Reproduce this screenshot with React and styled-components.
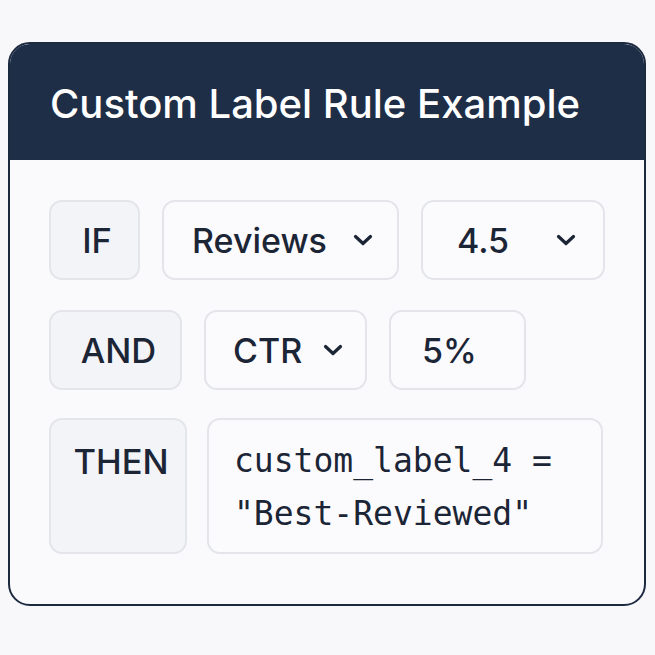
import React from "react";
import styled, { createGlobalStyle } from "styled-components";

const GlobalStyle = createGlobalStyle`
  html, body {
    margin: 0;
    padding: 0;
    background: #f8f8fa;
    font-family: Inter, "Liberation Sans", sans-serif;
  }
`;

const Page = styled.div`
  width: 655px;
  height: 655px;
  padding: 42px 9px 0 8px;
  box-sizing: border-box;
`;

const Card = styled.div`
  width: 638px;
  height: 564px;
  box-sizing: border-box;
  border: 2.5px solid #1c2a40;
  border-radius: 22px;
  overflow: hidden;
  background: #fafafc;
  display: flex;
  flex-direction: column;
`;

const Header = styled.div`
  height: 116px;
  background: #1f2e47;
  display: flex;
  align-items: center;
  padding-left: 40px;
  padding-top: 2px;
  box-sizing: border-box;
`;

const Title = styled.h1`
  margin: 0;
  color: #ffffff;
  font-size: 40px;
  font-weight: 500;
  letter-spacing: 0;
`;

const Body = styled.div`
  padding: 40px 0 0 39px;
  display: flex;
  flex-direction: column;
`;

const Row = styled.div`
  display: flex;
  gap: ${(p) => p.$gap || 21}px;
  margin-bottom: ${(p) => p.$mb || 0}px;
`;

const Box = styled.div`
  box-sizing: border-box;
  width: ${(p) => p.$w}px;
  height: ${(p) => p.$h || 80}px;
  border: 2px solid #e3e5ea;
  border-radius: 13px;
  background: ${(p) => (p.$keyword ? "#f3f4f8" : "#fbfbfd")};
  color: #1c2536;
  font-size: 34px;
  font-weight: 500;
  display: flex;
  align-items: center;
`;

const Keyword = styled(Box)`
  justify-content: center;
  font-size: 34.5px;
  padding-left: ${(p) => p.$shift || 0}px;
  align-items: ${(p) => (p.$top ? "flex-start" : "center")};
  padding-top: ${(p) => (p.$top ? 21 : 0)}px;
`;

const Select = styled(Box)`
  justify-content: space-between;
  padding: 0 ${(p) => p.$pr}px 0 ${(p) => p.$pl}px;
`;

const Field = styled(Box)`
  padding-left: ${(p) => p.$pl}px;
`;

const Code = styled(Box)`
  font-family: "DejaVu Sans Mono", "Liberation Mono", monospace;
  font-weight: 400;
  font-size: 33px;
  line-height: 53px;
  align-items: flex-start;
  padding: 14px 0 0 25px;
  white-space: pre;
`;

const Chevron = () => (
  <svg width="22" height="14" viewBox="0 0 22 14">
    <polyline
      points="3.5,3.5 11,10.5 18.5,3.5"
      fill="none"
      stroke="#1c2536"
      strokeWidth="3.2"
      strokeLinecap="round"
      strokeLinejoin="round"
    />
  </svg>
);

export default function App() {
  return (
    <Page>
      <GlobalStyle />
      <Card>
        <Header>
          <Title>Custom Label Rule Example</Title>
        </Header>
        <Body>
          <Row $mb={30} $gap={22}>
            <Keyword $keyword $w={91} $shift={5}>IF</Keyword>
            <Select $w={237} $pl={28} $pr={23}>
              <span>Reviews</span>
              <Chevron />
            </Select>
            <Select $w={184} $pl={34} $pr={26}>
              <span>4.5</span>
              <Chevron />
            </Select>
          </Row>
          <Row $mb={28} $gap={22}>
            <Keyword $keyword $w={133} $shift={6}>AND</Keyword>
            <Select $w={163} $pl={27} $pr={21}>
              <span>CTR</span>
              <Chevron />
            </Select>
            <Field $w={137} $pl={31}>5%</Field>
          </Row>
          <Row $gap={20}>
            <Keyword $keyword $top $w={138} $h={136} $shift={6}>THEN</Keyword>
            <Code $w={396} $h={136}>
              {'custom_label_4 =\n"Best-Reviewed"'}
            </Code>
          </Row>
        </Body>
      </Card>
    </Page>
  );
}
